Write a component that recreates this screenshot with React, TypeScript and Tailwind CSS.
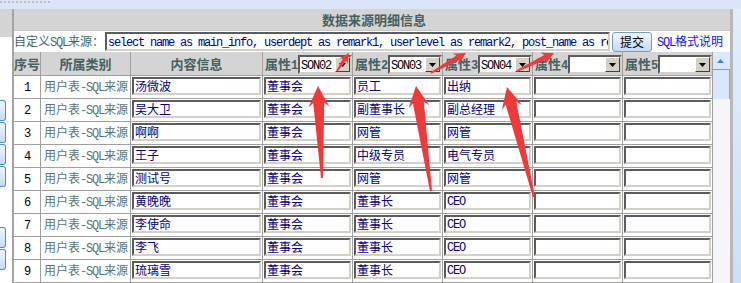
import React from "react";

const rows: [number, string, string, string, string][] = [
  [1, "汤微波", "董事会", "员工", "出纳"],
  [2, "吴大卫", "董事会", "副董事长", "副总经理"],
  [3, "啊啊", "董事会", "网管", "网管"],
  [4, "王子", "董事会", "中级专员", "电气专员"],
  [5, "测试号", "董事会", "网管", "网管"],
  [6, "黄晚晚", "董事会", "董事长", "CEO"],
  [7, "李使命", "董事会", "董事长", "CEO"],
  [8, "李飞", "董事会", "董事长", "CEO"],
  [9, "琉璃雪", "董事会", "董事长", "CEO"],
];

function T({ s }: { s: string }) {
  const parts = s.match(/[\x00-\x7f]+|[^\x00-\x7f]+/g) || [];
  return (
    <span className="whitespace-pre">
      {parts.map((p, i) =>
        /^[\x00-\x7f]+$/.test(p) ? (
          <span
            key={i}
            className="font-['Liberation_Mono',monospace] text-[12px] tracking-[-1.2px] whitespace-pre"
          >
            {p}
          </span>
        ) : (
          <span key={i}>{p}</span>
        )
      )}
    </span>
  );
}

function Inset({ children, className = "" }: { children?: React.ReactNode; className?: string }) {
  return (
    <div
      className={
        "flex items-center bg-white border-2 border-t-[#5c5c5c] border-l-[#5c5c5c] border-b-[#d4d0c8] border-r-[#d4d0c8] overflow-hidden whitespace-nowrap " +
        className
      }
    >
      {children}
    </div>
  );
}

function Select({ value }: { value: string }) {
  return (
    <Inset className="w-[54px] h-[19px] justify-between font-normal">
      <span className="pl-[1px] text-black">
        <T s={value} />
      </span>
      <div className="w-[15px] h-[15px] shrink-0 bg-[#d4d0c8] border border-t-white border-l-white border-b-[#404040] border-r-[#404040] flex items-center justify-center">
        <svg width="7" height="4" viewBox="0 0 7 4">
          <path d="M0 0h7L3.5 4z" fill="#000" />
        </svg>
      </div>
    </Inset>
  );
}

function arrowPoints(
  x1: number,
  y1: number,
  x2: number,
  y2: number,
  h: number,
  W: number,
  s: number,
  t: number
) {
  const dx = x2 - x1;
  const dy = y2 - y1;
  const L = Math.hypot(dx, dy);
  const ux = dx / L;
  const uy = dy / L;
  const nx = -uy;
  const ny = ux;
  const P = (u: number, v: number) => `${x1 + ux * u + nx * v},${y1 + uy * u + ny * v}`;
  return [
    P(0, -t / 2),
    P(L - h * 0.8, -s / 2),
    P(L - h, -W / 2),
    P(L, 0),
    P(L - h, W / 2),
    P(L - h * 0.8, s / 2),
    P(0, t / 2),
  ].join(" ");
}

const arrows = [
  { a: [322, 178, 318, 86], h: 21, W: 21, s: 11, t: 2 },
  { a: [431, 191, 416, 86], h: 21, W: 21, s: 11, t: 2 },
  { a: [534, 197, 507, 87], h: 21, W: 21, s: 11, t: 2 },
  { a: [337, 71, 349, 53], h: 10, W: 10, s: 4, t: 1.5 },
  { a: [431, 73, 466, 53], h: 12, W: 12, s: 5, t: 1.5 },
  { a: [517, 71, 554, 53], h: 12, W: 12, s: 5, t: 1.5 },
];

const hdr =
  "border-r border-b border-[#a0a0a0] bg-[#d4d4d4] h-[24px] flex items-center font-bold text-[13px] text-[#466060]";
const cell = "border-r border-b border-[#a0a0a0] h-[23px] flex bg-white";

export default function App() {
  return (
    <div className="relative w-[741px] h-[283px] overflow-hidden bg-[#d2e2f5] font-['Noto_Sans_CJK_SC',sans-serif] text-[12px] leading-none">
      <div className="h-[9px] bg-[#dae6f5] pt-[1px]">
        <div className="w-[50px] border-t-2 border-dotted border-[#b3c6dd]" />
      </div>
      <div className="flex h-[274px]">
        <div className="w-[12px] shrink-0 flex flex-col">
          <div className="h-[28px] bg-[#d4d4d4]" />
          <div className="flex-1 bg-white flex flex-col pt-[63px] gap-[1px]">
            {[0, 1, 2, 3].map((i) => (
              <div
                key={i}
                className="w-[6px] h-[21px] rounded-r-[3px] border border-l-0 border-[#4f8ad6] bg-gradient-to-b from-[#eef5fd] to-[#c6dbf5]"
              />
            ))}
            <div className="h-[38px]" />
            {[0, 1].map((i) => (
              <div
                key={i}
                className="w-[6px] h-[21px] rounded-r-[3px] border border-l-0 border-[#4f8ad6] bg-gradient-to-b from-[#eef5fd] to-[#c6dbf5]"
              />
            ))}
          </div>
        </div>

        <div className="w-[721px] shrink-0 flex flex-col border-l-2 border-r-[3px] border-l-[#a4a4a4] border-r-[#b8b8b8] bg-white">
          <div className="h-[28px] bg-[#d4d4d4] border-b border-[#c4c4c4] flex items-center justify-center pl-[4px] font-bold text-[13px] text-[#466060]">
            数据来源明细信息
          </div>
          <div className="h-[21px] flex items-start pt-[1px]">
            <div className="w-[91px] h-[19px] flex items-center text-[#3e6868]">
              <T s="自定义SQL来源：" />
            </div>
            <Inset className="w-[505px] h-[19px] pl-[1px] text-[#000080]">
              <T s="select name as main_info, userdept as remark1, userlevel as remark2, post_name as re" />
            </Inset>
            <button className="ml-[2px] w-[40px] h-[20px] rounded-[3px] border border-[#7b9cc6] bg-gradient-to-b from-[#f4f8fd] to-[#c5d9f3] text-black text-[12px] flex items-center justify-center">
              提交
            </button>
            <div className="ml-[5px] h-[19px] flex items-center text-[#1010ff]">
              <T s="SQL格式说明" />
            </div>
          </div>

          <div className="flex">
            <div className="grid grid-cols-[27px_90px_132px_90px_90px_90px_90px_90px] w-[699px]">
              <div className={hdr + " justify-center"}>序号</div>
              <div className={hdr + " justify-center"}>所属类别</div>
              <div className={hdr + " justify-center"}>内容信息</div>
              {["SON02", "SON03", "SON04", "", ""].map((v, i) => (
                <div key={i} className={hdr + " justify-between items-start pl-[2px] pt-[3px]"}>
                  <span className="h-[19px] flex items-center">
                    <T s={"属性" + (i + 1)} />
                  </span>
                  <Select value={v} />
                </div>
              ))}
              {rows.map((r) => (
                <React.Fragment key={r[0]}>
                  <div className={cell + " items-center justify-center text-black"}>
                    <T s={String(r[0])} />
                  </div>
                  <div className={cell + " items-center pl-[3px] text-[#577474] whitespace-nowrap"}>
                    <T s="用户表-SQL来源" />
                  </div>
                  {[r[1], r[2], r[3], r[4], "", ""].map((v, i) => (
                    <div key={i} className={cell + " items-start px-[1px] pt-[1px]"}>
                      <Inset className="flex-1 h-[18px] pl-[1px] text-[#000080]">
                        <T s={v} />
                      </Inset>
                    </div>
                  ))}
                </React.Fragment>
              ))}
            </div>
            <div className="w-[17px] flex flex-col bg-[#f4f6f9]">
              <div className="h-[18px] bg-[#d9e8fc] border-b border-[#6d9fe3] flex items-center justify-center pr-[2px]">
                <svg width="7" height="4" viewBox="0 0 7 4">
                  <path d="M0 4h7L3.5 0z" fill="#4a7fd2" />
                </svg>
              </div>
              <div className="h-[29px] bg-[#d8e7fb] border-r border-[#7fa8e2]" />
            </div>
          </div>
        </div>

        <div className="flex-1 bg-gradient-to-b from-[#e3edf9] to-[#cddff4]" />
      </div>

      <svg className="absolute left-0 top-0 pointer-events-none" width="741" height="283">
        {arrows.map((ar, i) => (
          <polygon
            key={i}
            points={arrowPoints(ar.a[0], ar.a[1], ar.a[2], ar.a[3], ar.h, ar.W, ar.s, ar.t)}
            fill="#f03a3a"
          />
        ))}
      </svg>
    </div>
  );
}
